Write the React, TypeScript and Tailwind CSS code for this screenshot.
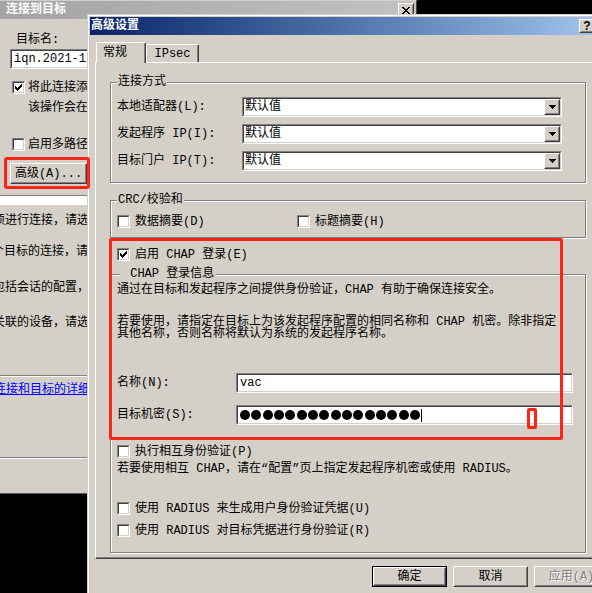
import type { ReactNode } from "react";

const TICK = ["......X", ".....XX", "X...XXX", "XX.XXX.", "XXXXX..", ".XXX...", "..X...."];
const CROSS = ["XX....XX", ".XX..XX.", "..XXXX..", "...XX...", "..XXXX..", ".XX..XX.", "XX....XX"];
const ARROW = ["XXXXXXX", ".XXXXX.", "..XXX..", "...X..."];

function Pixels({ rows }: { rows: string[] }) {
  const w = rows[0].length;
  const h = rows.length;
  return (
    <svg width={w} height={h} viewBox={`0 0 ${w} ${h}`} shapeRendering="crispEdges">
      {rows.flatMap((row, y) =>
        [...row].map((c, x) =>
          c === "X" ? <rect key={`${x}-${y}`} x={x} y={y} width={1} height={1} fill="#000" /> : null,
        ),
      )}
    </svg>
  );
}

function Raised({
  className = "",
  children,
}: {
  className?: string;
  children?: ReactNode;
}) {
  return (
    <div
      className={`flex border border-t-white border-l-white border-b-[#404040] border-r-[#404040] bg-[#d4d0c8] ${className}`}
    >
      <div className="flex flex-1 items-center justify-center border border-t-[#d4d0c8] border-l-[#d4d0c8] border-b-[#808080] border-r-[#808080]">
        {children}
      </div>
    </div>
  );
}

function Sunken({
  className = "",
  inner = "",
  children,
}: {
  className?: string;
  inner?: string;
  children?: ReactNode;
}) {
  return (
    <div
      className={`flex border border-t-[#808080] border-l-[#808080] border-b-white border-r-white ${className}`}
    >
      <div
        className={`flex min-w-0 flex-1 items-center overflow-hidden whitespace-nowrap border border-t-[#404040] border-l-[#404040] border-b-[#d4d0c8] border-r-[#d4d0c8] bg-white ${inner}`}
      >
        {children}
      </div>
    </div>
  );
}

function Checkbox({ checked = false }: { checked?: boolean }) {
  return (
    <span className="flex size-[13px] shrink-0 border border-t-[#808080] border-l-[#808080] border-b-white border-r-white">
      <span className="flex flex-1 items-center justify-center border border-t-[#404040] border-l-[#404040] border-b-[#d4d0c8] border-r-[#d4d0c8] bg-white">
        {checked && <Pixels rows={TICK} />}
      </span>
    </span>
  );
}

function CheckRow({
  checked = false,
  className = "",
  children,
}: {
  checked?: boolean;
  className?: string;
  children: ReactNode;
}) {
  return (
    <div className={`flex h-[13px] items-center whitespace-nowrap ${className}`}>
      <Checkbox checked={checked} />
      <span>{children}</span>
    </div>
  );
}

function Group({
  title,
  className = "",
  children,
}: {
  title: ReactNode;
  className?: string;
  children: ReactNode;
}) {
  return (
    <fieldset
      className={`w-[476px] border border-[#808080] px-[6px] shadow-[1px_1px_0_#fff,inset_1px_1px_0_#fff] ${className}`}
    >
      {title}
      {children}
    </fieldset>
  );
}

function Combo({ label }: { label: string }) {
  return (
    <div className="flex h-[20px] items-center">
      <span className="w-[125px] whitespace-nowrap">{label}</span>
      <Sunken className="h-[20px] w-[320px]" inner="pl-[1px]">
        <span className="flex-1">默认值</span>
        <Raised className="h-[16px] w-[16px]">
          <Pixels rows={ARROW} />
        </Raised>
      </Sunken>
    </div>
  );
}

function BackWindow() {
  return (
    <div className="absolute left-0 top-0 flex h-[494px] w-[417px] flex-col overflow-hidden border-t border-r border-b border-t-[#d4d0c8] border-r-[#404040] border-b-[#5a5a5a] bg-[#d4d0c8]">
      <div className="flex h-[18px] shrink-0 items-center justify-between bg-linear-to-r from-[#a4a4a4] to-[#c2c2c2] pl-[6px] pr-[2px]">
        <span className="font-bold text-white">连接到目标</span>
        <Raised className="h-[14px] w-[16px]">
          <Pixels rows={CROSS} />
        </Raised>
      </div>

      <div className="ml-[16px] mt-[15px]">目标名:</div>
      <Sunken className="ml-[10px] mt-[3px] h-[20px] w-[160px]" inner="pl-[2px]">
        iqn.2021-12.com.example:target
      </Sunken>
      <CheckRow checked className="ml-[12px] mt-[12px] gap-[3px]">
        将此连接添加到收藏目标列表。
      </CheckRow>
      <div className="ml-[28px] mt-[8px] whitespace-nowrap">该操作会在每次重新启动时</div>
      <CheckRow className="ml-[12px] mt-[24px] gap-[3px]">启用多路径(E)</CheckRow>
      <Raised className="ml-[10px] mt-[12px] h-[21px] w-[77px]">
        <span className="whitespace-nowrap">高级(A)...</span>
      </Raised>

      <div className="mt-[11px] h-[10px] shrink-0 border-t border-t-[#808080] bg-white" />

      <div className="-ml-[7px] mt-[10px] whitespace-nowrap">须进行连接，请选择目标</div>
      <div className="-ml-[8px] mt-[19px] whitespace-nowrap">个目标的连接，请单击</div>
      <div className="-ml-[7px] mt-[24px] whitespace-nowrap">包括会话的配置，请单击</div>
      <div className="-ml-[7px] mt-[23px] whitespace-nowrap">关联的设备，请选择目标</div>

      <div className="mt-[46px] h-[2px] shrink-0 border-t border-b border-t-[#808080] border-b-white" />
      <div className="-ml-[6px] mt-[7px] whitespace-nowrap text-[#0000ff] underline">
        连接和目标的详细信息
      </div>
      <div className="mt-[61px] h-[2px] shrink-0 border-t border-b border-t-[#808080] border-b-white" />
    </div>
  );
}

function AdvancedDialog() {
  const dots = Array.from({ length: 16 }, (_, i) => i);

  return (
    <div className="absolute left-[87px] top-[14px] flex h-[590px] w-[530px] border border-t-[#d4d0c8] border-l-[#d4d0c8] border-b-[#404040] border-r-[#404040]">
      <div className="flex flex-1 flex-col border border-t-white border-l-white border-b-[#808080] border-r-[#808080] bg-[#d4d0c8] p-[1px]">
        {/* title bar */}
        <div className="flex h-[18px] shrink-0 items-center justify-between bg-linear-to-r from-[#0a246a] to-[#a6caf0] pl-[1px] pr-[1px]">
          <span className="font-bold text-white">高级设置</span>
          <div className="flex gap-[2px]">
            <Raised className="h-[14px] w-[16px]">
              <span className="font-['Liberation_Sans',sans-serif] text-[12px] font-bold leading-none">?</span>
            </Raised>
            <Raised className="h-[14px] w-[16px]">
              <Pixels rows={CROSS} />
            </Raised>
          </div>
        </div>

        {/* tabs */}
        <div className="mt-[7px] flex items-end pl-[6px]">
          <div className="relative z-10 -mb-[1px] flex h-[21px] w-[50px] items-center rounded-t-[2px] border-t border-l border-r border-t-white border-l-white border-r-[#404040] bg-[#d4d0c8] pl-[6px] shadow-[inset_-1px_0_0_#808080]">
            常规
          </div>
          <div className="flex h-[18px] w-[53px] items-center justify-center rounded-t-[2px] border-t border-l border-r border-t-white border-l-white border-r-[#404040] shadow-[inset_-1px_0_0_#808080]">
            IPsec
          </div>
        </div>

        {/* tab panel */}
        <div className="ml-[5px] flex h-[497px] w-[515px] shrink-0 flex-col border border-t-white border-l-white border-b-[#404040] border-r-[#404040] pl-[14px] pt-[13px] shadow-[inset_-1px_-1px_0_#808080]">
          <Group
            title={<legend className="bg-[#d4d0c8] px-[1px]">连接方式</legend>}
            className="pb-[11px] pt-[9px]"
          >
            <div className="flex flex-col gap-[7px]">
              <Combo label="本地适配器(L):" />
              <Combo label="发起程序 IP(I):" />
              <Combo label="目标门户 IP(T):" />
            </div>
          </Group>

          <Group
            title={<legend className="bg-[#d4d0c8] px-[1px]">CRC/校验和</legend>}
            className="mt-[11px] pb-[9px] pt-[9px]"
          >
            <div className="flex">
              <CheckRow className="w-[180px] gap-[5px]">数据摘要(D)</CheckRow>
              <CheckRow className="gap-[5px]">标题摘要(H)</CheckRow>
            </div>
          </Group>

          <CheckRow checked className="ml-[7px] mt-[10px] gap-[5px]">
            启用 CHAP 登录(E)
          </CheckRow>

          <Group
            title={
              <legend className="ml-[3px] bg-[#d4d0c8] pl-[3px] pr-[2px]">
                {"\u00a0"}CHAP 登录信息
              </legend>
            }
            className="mt-[7px] pb-[15px] pt-[4px]"
          >
            <p className="whitespace-nowrap">
              通过在目标和发起程序之间提供身份验证，CHAP 有助于确保连接安全。
            </p>
            <p className="mt-[20px] whitespace-nowrap">
              若要使用，请指定在目标上为该发起程序配置的相同名称和 CHAP 机密。除非指定
              <br />
              其他名称，否则名称将默认为系统的发起程序名称。
            </p>

            <div className="mt-[33px] flex h-[20px] items-center">
              <span className="w-[119px]">名称(N):</span>
              <Sunken className="h-[20px] w-[337px]" inner="pl-[2px]">
                vac
              </Sunken>
            </div>
            <div className="mt-[12px] flex h-[20px] items-center">
              <span className="w-[119px]">目标机密(S):</span>
              <Sunken className="h-[20px] w-[337px]" inner="pl-[2px]">
                <div className="flex w-[180px] justify-between">
                  {dots.map((i) => (
                    <span key={i} className="size-[10px] rounded-full bg-black" />
                  ))}
                </div>
                <span className="ml-[1px] h-[13px] w-[1px] bg-black" />
              </Sunken>
            </div>

            <CheckRow className="mt-[20px] gap-[5px]">执行相互身份验证(P)</CheckRow>
            <p className="mt-[5px] whitespace-nowrap">
              若要使用相互 CHAP，请在“配置”页上指定发起程序机密或使用 RADIUS。
            </p>
            <CheckRow className="mt-[27px] gap-[5px]">
              使用 RADIUS 来生成用户身份验证凭据(U)
            </CheckRow>
            <CheckRow className="mt-[9px] gap-[5px]">
              使用 RADIUS 对目标凭据进行身份验证(R)
            </CheckRow>
          </Group>
        </div>

        {/* buttons */}
        <div className="mt-[7px] flex gap-[6px] pl-[282px]">
          <div className="flex h-[21px] w-[75px] border border-black">
            <Raised className="flex-1">确定</Raised>
          </div>
          <Raised className="h-[21px] w-[75px]">取消</Raised>
          <Raised className="h-[21px] w-[75px]">
            <span className="text-[#808080] [text-shadow:1px_1px_0_#fff]">应用(A)</span>
          </Raised>
        </div>
      </div>
    </div>
  );
}

export default function App() {
  return (
    <div className="relative h-[593px] w-[592px] overflow-hidden bg-black font-['Liberation_Mono','Noto_Sans_CJK_SC',monospace] text-[12px] leading-[12px] text-black">
      <BackWindow />
      <AdvancedDialog />

      {/* red annotation boxes from the screenshot */}
      <div className="pointer-events-none absolute left-[4px] top-[157px] h-[32px] w-[86px] rounded-[3px] border-[3px] border-[#ff2418]" />
      <div className="pointer-events-none absolute left-[109px] top-[238px] h-[202px] w-[454px] rounded-[2px] border-[3px] border-[#ff2418]" />
      <div className="pointer-events-none absolute left-[527px] top-[408px] h-[21px] w-[10px] rounded-[2px] border-[3px] border-[#ff2418]" />
    </div>
  );
}
